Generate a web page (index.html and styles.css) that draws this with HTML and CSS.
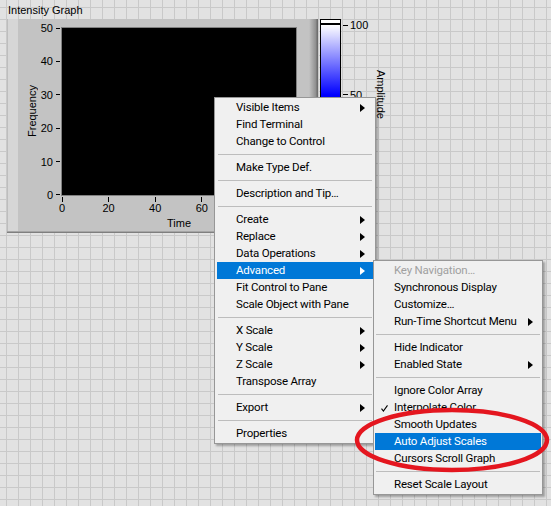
FILE: index.html
```html
<!DOCTYPE html>
<html lang="en">
<head>
  <meta charset="UTF-8" />
  <title>Intensity Graph</title>
  <link rel="stylesheet" href="styles.css">
</head>
<body>
  <div class="graph">
    <div class="caption">Intensity Graph</div>
    <div class="graph-row">
      <div class="panel">
        <div class="y-title">Frequency</div>
        <div class="y-axis">
          <div class="y-tick"><span>50</span><i></i></div>
          <div class="y-tick"><span>40</span><i></i></div>
          <div class="y-tick"><span>30</span><i></i></div>
          <div class="y-tick"><span>20</span><i></i></div>
          <div class="y-tick"><span>10</span><i></i></div>
          <div class="y-tick"><span>0</span><i></i></div>
        </div>
        <div class="plot-col">
          <div class="plot"></div>
          <div class="x-axis">
            <div class="x-tick"><i></i><span>0</span></div>
            <div class="x-tick"><i></i><span>20</span></div>
            <div class="x-tick"><i></i><span>40</span></div>
            <div class="x-tick"><i></i><span>60</span></div>
            <div class="x-tick"><i></i><span>80</span></div>
            <div class="x-tick"><i></i><span>100</span></div>
          </div>
          <div class="x-title">Time</div>
        </div>
      </div>
      <div class="ramp"></div>
      <div class="ramp-axis">
        <div class="z-tick"><i></i><span>100</span></div>
        <div class="z-tick"><i></i><span>50</span></div>
        <div class="z-tick"><i></i><span>0</span></div>
      </div>
      <div class="z-title">Amplitude</div>
    </div>
  </div>

  <div class="menu context">
    <div class="item">Visible Items<span class="arrow"></span></div>
    <div class="item">Find Terminal</div>
    <div class="item">Change to Control</div>
    <div class="sep"></div>
    <div class="item">Make Type Def.</div>
    <div class="sep"></div>
    <div class="item">Description and Tip…</div>
    <div class="sep"></div>
    <div class="item">Create<span class="arrow"></span></div>
    <div class="item">Replace<span class="arrow"></span></div>
    <div class="item">Data Operations<span class="arrow"></span></div>
    <div class="item active">Advanced<span class="arrow"></span></div>
    <div class="item">Fit Control to Pane</div>
    <div class="item">Scale Object with Pane</div>
    <div class="sep"></div>
    <div class="item">X Scale<span class="arrow"></span></div>
    <div class="item">Y Scale<span class="arrow"></span></div>
    <div class="item">Z Scale<span class="arrow"></span></div>
    <div class="item">Transpose Array</div>
    <div class="sep"></div>
    <div class="item">Export<span class="arrow"></span></div>
    <div class="sep"></div>
    <div class="item">Properties</div>
  </div>

  <div class="menu submenu">
    <div class="item disabled">Key Navigation…</div>
    <div class="item">Synchronous Display</div>
    <div class="item">Customize…</div>
    <div class="item">Run-Time Shortcut Menu<span class="arrow"></span></div>
    <div class="sep"></div>
    <div class="item">Hide Indicator</div>
    <div class="item">Enabled State<span class="arrow"></span></div>
    <div class="sep"></div>
    <div class="item">Ignore Color Array</div>
    <div class="item">
      <svg class="check" width="7" height="7" viewBox="0 0 7 7"><path d="M0.5 3.6 L2.4 6 L6.5 0.4" fill="none" stroke="#000" stroke-width="1.1"/></svg>
      Interpolate Color
    </div>
    <div class="item">Smooth Updates</div>
    <div class="item active">Auto Adjust Scales</div>
    <div class="item">Cursors Scroll Graph</div>
    <div class="sep"></div>
    <div class="item">Reset Scale Layout</div>
  </div>

  <svg class="circle" width="200" height="72" viewBox="0 0 200 72">
    <ellipse cx="98" cy="36" rx="95" ry="30" fill="none" stroke="#e4161f" stroke-width="4.5"/>
  </svg>
</body>
</html>
```

FILE: styles.css
```css
body {
  margin: 0;
  height: 506px;
  overflow: hidden;
  font-family: "Liberation Sans", Arial, sans-serif;
  color: #000;
  background-color: #e2e2e2;
  background-image:
    linear-gradient(#c9c9c9 1px, transparent 1px),
    linear-gradient(90deg, #c9c9c9 1px, transparent 1px);
  background-size: 12px 12px;
  background-position: 6px 7px;
}

/* graph control */
.graph { padding: 4px 0 0 7px; }
.caption {
  font-size: 11px;
  line-height: 13px;
  padding-left: 1px;
  margin-bottom: 2px;
}
.graph-row {
  display: flex;
  align-items: flex-start;
}
.panel {
  width: 311px;
  height: 214px;
  box-sizing: border-box;
  display: flex;
  align-items: flex-start;
  padding: 8px 0 0 18px;
  background: linear-gradient(90deg, #bdbdbd 0 1px, #d6d6d6 1px 11px, #c3c3c3 11px calc(100% - 9px), #8e8e8e calc(100% - 2px), #6e6e6e calc(100% - 1px));
  border-bottom: 1px solid #7f7f7f;
  box-shadow: inset 0 -1px 0 #a5a5a5;
}
.y-title {
  width: 14px;
  height: 169px;
  writing-mode: vertical-rl;
  transform: rotate(180deg);
  text-align: center;
  font-size: 11px;
  line-height: 14px;
}
.y-axis {
  width: 22px;
  height: 181px;
  margin-top: -6px;
  display: flex;
  flex-direction: column;
  justify-content: space-between;
}
.y-tick {
  height: 14px;
  display: flex;
  align-items: center;
  justify-content: flex-end;
  font-size: 11px;
}
.y-tick i {
  width: 4px;
  height: 1px;
  background: #000;
  margin: 0 1px 0 3px;
}
.plot {
  width: 236px;
  height: 169px;
  box-sizing: border-box;
  background: #000;
  border: 1px solid #808080;
}
.x-axis {
  display: flex;
  justify-content: space-between;
  margin: 0 -10px 0 -11px;
}
.x-tick {
  width: 24px;
  display: flex;
  flex-direction: column;
  align-items: center;
  font-size: 11px;
  line-height: 13px;
}
.x-tick i {
  width: 1px;
  height: 5px;
  margin-top: 1px;
  background: #000;
}
.x-title {
  text-align: center;
  font-size: 11px;
  line-height: 13px;
  margin-top: 2px;
}

/* colour ramp */
.ramp {
  margin-left: 2px;
  width: 21px;
  height: 153px;
  box-sizing: border-box;
  border: 1px solid #000;
  background: linear-gradient(#fff 0 3px, #000 3px 5px, #fff 5px, #00f 75px, #000 144px);
}
.ramp-axis {
  width: 28px;
  height: 153px;
  margin-top: -1px;
  display: flex;
  flex-direction: column;
  justify-content: space-between;
}
.z-tick {
  height: 14px;
  display: flex;
  align-items: center;
  font-size: 11px;
}
.z-tick i {
  width: 5px;
  height: 1px;
  background: #000;
  margin: 0 2px;
}
.z-title {
  writing-mode: vertical-rl;
  font-size: 11px;
  line-height: 14px;
  margin: 51px 0 0 5px;
}

/* shortcut menus */
.menu {
  position: absolute;
  box-sizing: border-box;
  background: #f0f0f0;
  border: 1px solid #979797;
  box-shadow: 2px 2px 2px rgba(0, 0, 0, 0.3);
  font-family: Roboto, "Segoe UI", sans-serif;
  font-size: 11.5px;
  letter-spacing: -0.2px;
}
.context {
  left: 214px;
  top: 97px;
  width: 162px;
  padding: 1px 2px;
}
.submenu {
  left: 373px;
  top: 260px;
  width: 170px;
  padding: 1px;
}
.item {
  position: relative;
  height: 17px;
  line-height: 17px;
  padding: 0 8px 0 19px;
  display: flex;
  justify-content: space-between;
  align-items: center;
  white-space: nowrap;
}
.item.active { background: #0078d7; color: #fff; }
.item.disabled { color: #a0a0a0; }
.arrow {
  width: 0;
  height: 0;
  border-left: 5px solid #000;
  border-top: 4px solid transparent;
  border-bottom: 4px solid transparent;
}
.active .arrow { border-left-color: #fff; }
.sep {
  height: 1px;
  margin: 4px 1px;
  background: #bdbdbd;
}
.check {
  position: absolute;
  left: 6px;
  top: 6px;
}
.circle {
  position: absolute;
  left: 354px;
  top: 404px;
}
```
